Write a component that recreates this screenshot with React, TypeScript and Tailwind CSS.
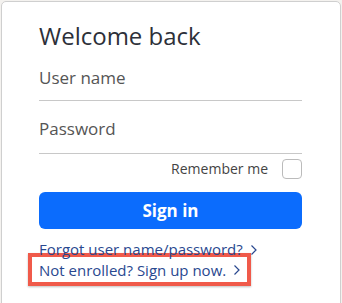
import { useState } from 'react';

function Chevron() {
  return (
    <svg width="8" height="12" viewBox="0 0 8 12" fill="none" className="inline-block ml-[7px] -mt-[2px]">
      <path d="M1.5 1.5 6 6l-4.5 4.5" stroke="currentColor" strokeWidth="1.2" />
    </svg>
  );
}

export default function App() {
  const [remember, setRemember] = useState(false);

  return (
    <div
      className="w-[342px] h-[303px] bg-[#f4f2ef] overflow-hidden pt-px px-px"
      style={{ fontFamily: '"Open Sans", "Liberation Sans", sans-serif' }}
    >
      <div className="h-[320px] bg-white border border-[#cfcfcf] rounded-[5px] pl-[37px] pr-[38px] pt-[17px]">
        <h1 className="text-[24px] leading-[34px] text-[#2d3039]">Welcome back</h1>

        {/* username */}
        <div className="mt-[13px] border-b border-[#c8c8c8] h-[35px] flex items-start">
          <input
            type="text"
            placeholder="User name"
            className="w-full bg-transparent text-[17px] leading-[24px] text-[#333] placeholder:text-[#555] outline-none"
          />
        </div>

        {/* password */}
        <div className="mt-[16px] border-b border-[#c8c8c8] h-[37px] flex items-start">
          <input
            type="password"
            placeholder="Password"
            className="w-full bg-transparent text-[17px] leading-[24px] text-[#333] placeholder:text-[#555] outline-none"
          />
        </div>

        <label className="mt-[4px] flex items-center justify-end gap-[14px] cursor-pointer">
          <span className="text-[14px] text-[#444]">Remember me</span>
          <input
            type="checkbox"
            checked={remember}
            onChange={(e) => setRemember(e.target.checked)}
            className="appearance-none w-[20px] h-[20px] border border-[#bbb] rounded-[4px] bg-white"
          />
        </label>

        <button className="mt-[13px] w-full h-[37px] rounded-[6px] bg-[#0b6cfd] text-white text-[17px] font-bold">
          Sign in
        </button>

        <div className="mt-[10px] text-[15px] leading-[20px] text-[#29488f]">
          Forgot user name/password?<Chevron />
        </div>

        <div className="-mt-[6px] -ml-[11px] w-[223px] h-[33px] border-[4px] border-[#f05a4a] shadow-[0_1px_2px_rgba(0,0,0,0.25)] pl-[7px] flex items-center">
          <span className="text-[15px] leading-[20px] text-[#29488f]">
            Not enrolled? Sign up now.<Chevron />
          </span>
        </div>
      </div>
    </div>
  );
}
